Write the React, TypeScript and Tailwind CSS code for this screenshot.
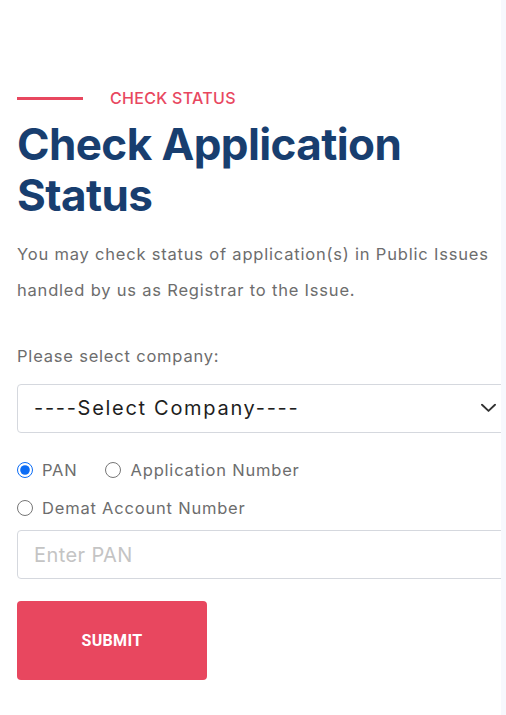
import React, { useState } from 'react';

const App: React.FC = () => {
  const [mode, setMode] = useState<'pan' | 'app' | 'demat'>('pan');

  const placeholder =
    mode === 'pan' ? 'Enter PAN' : mode === 'app' ? 'Enter Application Number' : 'Enter Demat Account Number';

  return (
    <div className="flex w-full min-h-screen bg-white" style={{ fontFamily: 'Inter, "Open Sans", sans-serif' }}>
      {/* Main content */}
      <main className="w-[501px] shrink-0 overflow-hidden pl-[17px] pt-[86px] pb-[35px]">
        <div className="flex items-center h-6">
          <span className="block w-[66px] h-[3px] bg-[#e8475f]" />
          <span className="ml-[27px] text-[16px] font-medium text-[#e8475f] tracking-[0.3px]">CHECK STATUS</span>
        </div>

        <h1 className="mt-[9px] text-[44px] leading-[51px] font-bold text-[#183e6f] tracking-[-0.6px]">
          Check Application
          <br />
          Status
        </h1>

        <p className="mt-[15px] text-[16.5px] leading-[36px] text-[#6d6d6d] tracking-[0.8px] pr-1">
          You may check status of application(s) in Public Issues handled by us as Registrar to the Issue.
        </p>

        <label className="block mt-[36px] text-[16.5px] text-[#6d6d6d] tracking-[0.8px]">Please select company:</label>

        {/* Company select */}
        <div className="relative mt-[15px] w-[500px]">
          <select
            defaultValue=""
            className="appearance-none w-full h-[49px] rounded-[4px] border border-[#d5d8de] bg-white pl-4 pr-10 text-[20px] text-[#1e1e1e] tracking-[1.7px] outline-none"
          >
            <option value="">----Select Company----</option>
          </select>
          <svg
            width="15"
            height="9"
            viewBox="0 0 15 9"
            className="absolute left-[464px] top-1/2 -translate-y-1/2 pointer-events-none"
          >
            <polyline points="1,1.2 7.5,7.4 14,1.2" fill="none" stroke="#333" strokeWidth="1.9" strokeLinecap="round" strokeLinejoin="round" />
          </svg>
        </div>

        {/* Search mode */}
        <div className="mt-[25px] flex flex-wrap items-center gap-y-[13px] text-[16.5px] text-[#6d6d6d] tracking-[0.8px]">
          <label className="flex items-center gap-[9px] mr-[27px]">
            <input
              type="radio"
              name="mode"
              checked={mode === 'pan'}
              onChange={() => setMode('pan')}
              className="w-4 h-4 m-0 accent-[#0b6cf5]"
            />
            PAN
          </label>
          <label className="flex items-center gap-[10px]">
            <input
              type="radio"
              name="mode"
              checked={mode === 'app'}
              onChange={() => setMode('app')}
              className="w-4 h-4 m-0 accent-[#0b6cf5]"
            />
            Application Number
          </label>
          <label className="flex items-center gap-[9px] w-full">
            <input
              type="radio"
              name="mode"
              checked={mode === 'demat'}
              onChange={() => setMode('demat')}
              className="w-4 h-4 m-0 accent-[#0b6cf5]"
            />
            Demat Account Number
          </label>
        </div>

        <input
          type="text"
          placeholder={placeholder}
          className="mt-[10px] block w-[500px] h-[49px] rounded-[4px] border border-[#d5d8de] bg-white px-4 text-[20px] text-[#1e1e1e] tracking-[0.4px] placeholder:text-[#c4c4c4] outline-none"
        />

        <button
          className="mt-[22px] w-[190px] h-[79px] rounded-[4px] bg-[#e8475f] text-white text-[16px] font-bold tracking-[0.3px]"
          style={{ fontFamily: 'Roboto, sans-serif' }}
        >
          SUBMIT
        </button>
      </main>

      {/* Right edge strip */}
      <div className="flex-1 bg-[#f7f8fd]" />
    </div>
  );
};

export default App;
